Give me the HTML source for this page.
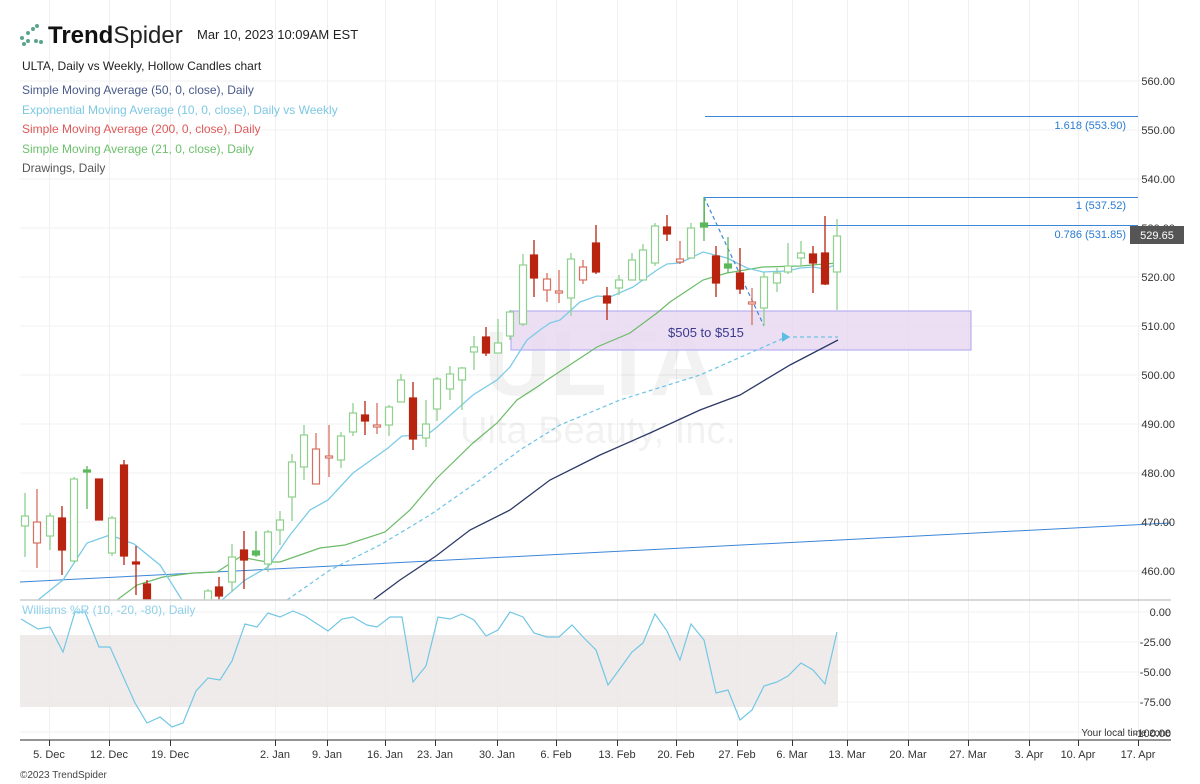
<!DOCTYPE html>
<html><head><meta charset="utf-8"><style>
body{margin:0;background:#fff;width:1200px;height:784px;overflow:hidden;font-family:"Liberation Sans",Arial,sans-serif}
svg{display:block}
</style></head><body>
<svg id="s" width="1200" height="784" xmlns="http://www.w3.org/2000/svg" font-family="Liberation Sans, Arial, sans-serif">
<defs><clipPath id="main"><rect x="20" y="0" width="1151" height="600"/></clipPath></defs>
<g id="grid" stroke="#f0f0f0" stroke-width="1"></g>
<text x="600" y="395" font-size="92" font-weight="bold" fill="#000" fill-opacity="0.05" text-anchor="middle">ULTA</text>
<text x="598" y="443" font-size="38" fill="#000" fill-opacity="0.05" text-anchor="middle">Ulta Beauty, Inc.</text>
<rect x="511" y="311" width="460" height="39" fill="#e7d7f0" fill-opacity="0.8" stroke="#b7b0f2" stroke-width="1.2"/>
<text x="668" y="337" font-size="13" fill="#3b3b8c">$505 to $515</text>
<g stroke="#3b86d8" stroke-width="1" fill="none">
<line x1="705" y1="116.5" x2="1138" y2="116.5"/>
<line x1="705" y1="197.5" x2="1138" y2="197.5"/>
<line x1="705" y1="225.5" x2="1138" y2="225.5"/>
<line x1="20" y1="582" x2="1171" y2="523"/>
</g>
<line x1="704.5" y1="197" x2="704.5" y2="226" stroke="#6cbf6a"/>
<g font-size="11" fill="#2a7bd0" text-anchor="end">
<text x="1126" y="129">1.618 (553.90)</text>
<text x="1126" y="209">1 (537.52)</text>
<text x="1126" y="238">0.786 (531.85)</text>
</g>
<g clip-path="url(#main)" fill="none">
<polyline id="sma50" stroke="#2d3a66" stroke-width="1.3"/>
<polyline id="sma21" stroke="#6cbb68" stroke-width="1.2"/>
<polyline id="ema10" stroke="#7ccbe6" stroke-width="1.3"/>
<polyline points="287,600 330,570 380,545 430,515 480,480 520,450 560,425 620,400 700,375 784,338" stroke="#6cc3e6" stroke-width="1.2" stroke-dasharray="4,3"/>
<line x1="786" y1="337" x2="838" y2="337" stroke="#6cc3e6" stroke-width="1.2" stroke-dasharray="4,3"/>
<line x1="704" y1="197" x2="764" y2="326" stroke="#3b86d8" stroke-width="1.2" stroke-dasharray="4,3"/>
<g id="candles"></g>
</g>
<polygon points="782,332 790,337 782,342" fill="#5bbde6"/>
<rect x="20" y="635" width="818" height="72" fill="#ede7e7" fill-opacity="0.85"/>
<line x1="20" y1="600" x2="1171" y2="600" stroke="#ccc" stroke-width="1.5"/>
<line x1="20" y1="740" x2="1171" y2="740" stroke="#555" stroke-width="1.2"/>
<polyline id="wr" fill="none" stroke="#72c7e4" stroke-width="1.2"/>
<text x="22" y="614" font-size="12" fill="#8fd0ea">Williams %R (10, -20, -80), Daily</text>
<g id="labels" font-size="11" fill="#333"></g>
<rect x="1130" y="226" width="54" height="18" fill="#555"/>
<text x="1157" y="239" font-size="11" fill="#fff" text-anchor="middle">529.65</text>
<g fill="#5aa58a"><circle cx="22" cy="38" r="2"/><circle cx="28" cy="33" r="2"/><circle cx="33" cy="29" r="2"/><circle cx="37" cy="26" r="2"/><circle cx="28" cy="41" r="2"/><circle cx="24" cy="44" r="2"/><circle cx="36" cy="41" r="2"/><circle cx="41" cy="42" r="2"/></g>
<text x="48" y="43" font-size="24" fill="#111"><tspan font-weight="bold">Trend</tspan><tspan fill="#222">Spider</tspan></text>
<text x="197" y="39" font-size="13" fill="#222">Mar 10, 2023 10:09AM EST</text>
<g font-size="12">
<text x="22" y="70" fill="#222">ULTA, Daily vs Weekly, Hollow Candles chart</text>
<text x="22" y="94" fill="#4a5b8a">Simple Moving Average (50, 0, close), Daily</text>
<text x="22" y="114" fill="#7cc8e3">Exponential Moving Average (10, 0, close), Daily vs Weekly</text>
<text x="22" y="133" fill="#de5a5a">Simple Moving Average (200, 0, close), Daily</text>
<text x="22" y="153" fill="#6cc06c">Simple Moving Average (21, 0, close), Daily</text>
<text x="22" y="172" fill="#555">Drawings, Daily</text>
</g>
<text x="20" y="778" font-size="10" fill="#444">©2023 TrendSpider</text>
</svg>
<script>
var NS="http://www.w3.org/2000/svg";
function el(p,t,a,txt){var e=document.createElementNS(NS,t);for(var k in a)e.setAttribute(k,a[k]);if(txt)e.textContent=txt;p.appendChild(e);return e;}
var g=document.getElementById('grid');
var vx=[49,109,170,275,327,385,435,497,556,617,676,737,792,847,908,968,1029,1078,1138];
vx.forEach(function(x){el(g,'line',{x1:x+.5,y1:0,x2:x+.5,y2:740});});
for(var p=560;p>=460;p-=10){var y=81+(560-p)*4.9;el(g,'line',{x1:20,y1:y,x2:1171,y2:y});}
[612,642,672,702,732].forEach(function(y){el(g,'line',{x1:20,y1:y,x2:1171,y2:y});});
var L=document.getElementById('labels');
for(var p=560;p>=460;p-=10){var y=81+(560-p)*4.9;el(L,'text',{x:1175,y:y+4,'text-anchor':'end'},p.toFixed(2));}
['0.00','-25.00','-50.00','-75.00'].forEach(function(t,i){el(L,'text',{x:1171,y:616+i*30,'text-anchor':'end'},t);});
el(L,'text',{x:1171,y:737,'text-anchor':'end'},'-100.00');
el(L,'text',{x:1171,y:736,'text-anchor':'end','font-size':'10'},'Your local time zone');
var dl=['5. Dec','12. Dec','19. Dec','2. Jan','9. Jan','16. Jan','23. Jan','30. Jan','6. Feb','13. Feb','20. Feb','27. Feb','6. Mar','13. Mar','20. Mar','27. Mar','3. Apr','10. Apr','17. Apr'];
vx.forEach(function(x,i){el(L,'line',{x1:x+.5,y1:740,x2:x+.5,y2:746,stroke:'#333'});el(L,'text',{x:x,y:758,'text-anchor':'middle'},dl[i]);});
var C=[[25,516,526,493,557,'g'],[37,522,543,489,568,'r'],[50,516,536,513,550,'g'],[62,518,550,506,575,'R'],[74,479,561,477,562,'g'],[87,470,472,466,509,'G'],[99,479,520,479,520,'R'],[112,518,553,516,556,'g'],[124,465,556,460,565,'R'],[136,562,564,546,595,'R'],[147,584,605,580,610,'R'],[208,591,605,589,610,'g'],[219,587,596,577,605,'R'],[232,557,582,544,592,'g'],[244,550,560,531,589,'R'],[256,551,555,531,557,'G'],[268,532,564,530,572,'g'],[280,520,530,511,545,'g'],[292,462,497,454,521,'g'],[304,435,467,425,480,'g'],[316,449,484,433,484,'r'],[329,456,458,425,477,'r'],[341,436,460,432,468,'g'],[353,413,432,403,436,'g'],[365,415,421,401,435,'R'],[377,425,427,403,434,'r'],[389,407,425,405,436,'g'],[401,380,402,374,402,'g'],[413,398,439,382,450,'R'],[426,424,438,400,447,'g'],[437,379,409,377,421,'g'],[450,374,389,366,400,'g'],[462,368,380,367,410,'g'],[474,347,352,336,370,'g'],[486,337,353,327,356,'R'],[498,343,353,319,353,'g'],[510,312,336,310,340,'g'],[523,265,324,254,326,'g'],[534,255,278,240,297,'R'],[547,279,290,273,302,'r'],[559,291,293,270,303,'r'],[571,259,298,253,316,'g'],[583,267,280,260,284,'r'],[596,243,272,225,274,'R'],[607,296,303,287,320,'R'],[619,280,288,275,295,'g'],[632,260,280,253,280,'g'],[643,250,280,244,280,'g'],[655,226,263,223,266,'g'],[667,227,234,215,241,'R'],[680,259,262,241,264,'r'],[691,228,258,223,258,'g'],[704,223,227,197,241,'G'],[716,256,283,246,297,'R'],[728,264,268,237,273,'G'],[740,273,289,248,294,'R'],[752,302,304,288,325,'r'],[764,277,308,272,326,'g'],[777,273,283,268,292,'g'],[788,266,272,243,274,'g'],[801,253,258,241,265,'g'],[813,254,263,246,293,'R'],[825,253,284,216,285,'R'],[837,236,272,219,310,'g']];
var cg=document.getElementById('candles');
C.forEach(function(c){var red=c[5].toLowerCase()=='r';var col=red?'#b82410':'#5cb85c';var lt=red?'#d87060':'#8fd08d';var fill=c[5]=='R'?'#b82410':(c[5]=='G'?'#5cb85c':'#fff');var sc=(c[5]=='g'||c[5]=='r')?lt:col;
el(cg,'line',{x1:c[0],y1:c[3],x2:c[0],y2:c[4],stroke:sc,'stroke-width':1.3});
el(cg,'rect',{x:c[0]-3.5,y:c[1],width:7,height:Math.max(2,c[2]-c[1]),fill:fill,stroke:sc,'stroke-width':1.2});});
document.getElementById('ema10').setAttribute('points','20,625 38,600 63,580 87,543 110,535 134,544 160,565 182,600 200,620 222,600 245,580 268,567 290,535 310,510 328,500 353,473 367,463 388,448 402,436 427,435 437,427 473,395 497,380 510,367 527,340 540,330 550,323 560,320 580,302 597,296 610,297 633,287 657,270 667,264 680,263 703,252 727,258 747,268 763,272 787,271 800,268 813,267 825,269 837,264');
document.getElementById('sma21').setAttribute('points','100,615 117,600 137,585 163,577 193,573 217,572 240,557 267,562 280,562 300,555 320,548 345,545 385,532 410,510 437,478 473,443 497,423 517,400 540,385 547,380 597,347 630,333 657,313 670,302 703,280 727,273 763,267 800,266 837,263');
document.getElementById('sma50').setAttribute('points','373,600 400,580 436,556 470,530 510,510 550,480 600,455 650,433 700,410 740,395 790,365 838,340');
document.getElementById('wr').setAttribute('points','21,619 38,629 50,627 63,652 75,612 85,612 99,647 110,647 135,703 147,723 160,717 172,727 183,723 196,691 208,678 220,680 232,661 245,624 257,627 268,613 280,617 293,611 305,616 328,631 342,619 353,617 367,625 377,627 390,617 402,617 413,682 426,666 438,617 450,619 462,614 474,620 486,636 498,630 510,612 523,617 534,633 547,637 559,637 572,625 583,637 596,650 608,685 619,670 632,652 643,643 655,614 667,631 680,660 691,624 704,640 716,693 728,690 740,720 752,710 764,686 777,682 788,676 801,663 813,670 825,684 837,632');
</script>
</body></html>
